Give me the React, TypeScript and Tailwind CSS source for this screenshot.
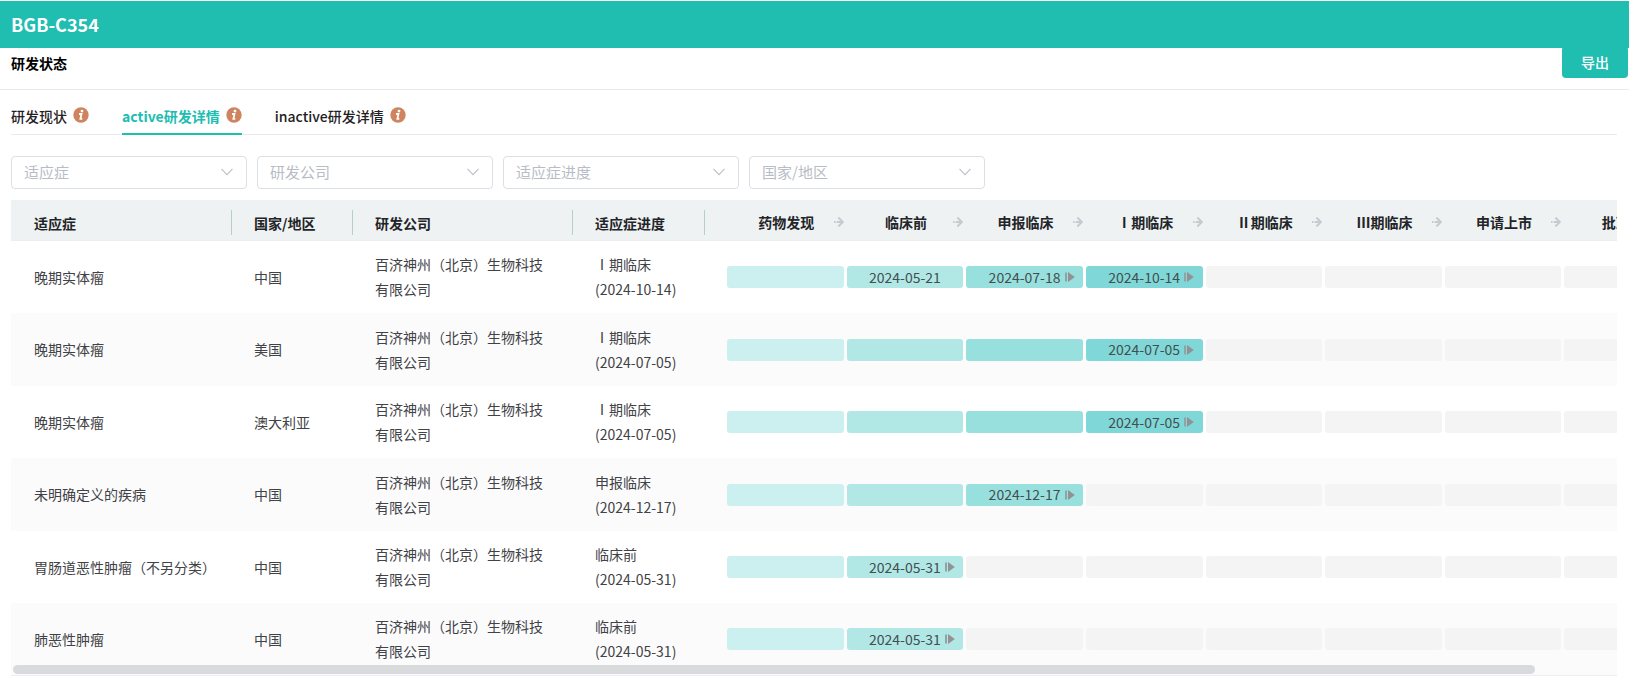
import React, { useState } from 'react';

type Tab = {
  key: string;
  label: string;
};

type Trial = {
  indication: string;
  region: string;
  company: string;
  phase: string;
  date: string;
  reached: number;
  dates: Record<number, { value: string; source?: boolean }>;
};

const tabs: Tab[] = [
  { key: 'status', label: '研发现状' },
  { key: 'active', label: 'active研发详情' },
  { key: 'inactive', label: 'inactive研发详情' },
];

const filters = ['适应症', '研发公司', '适应症进度', '国家/地区'];

const stages = ['药物发现', '临床前', '申报临床', 'Ⅰ期临床', 'Ⅱ期临床', 'Ⅲ期临床', '申请上市', '批准后'];

const stageColors = ['bg-[#cbf0ef]', 'bg-[#b1e8e6]', 'bg-[#98e0de]', 'bg-[#7fd8d7]'];

const company = '百济神州（北京）生物科技有限公司';

const trials: Trial[] = [
  {
    indication: '晚期实体瘤',
    region: '中国',
    company,
    phase: 'Ⅰ期临床',
    date: '2024-10-14',
    reached: 4,
    dates: {
      1: { value: '2024-05-21' },
      2: { value: '2024-07-18', source: true },
      3: { value: '2024-10-14', source: true },
    },
  },
  {
    indication: '晚期实体瘤',
    region: '美国',
    company,
    phase: 'Ⅰ期临床',
    date: '2024-07-05',
    reached: 4,
    dates: { 3: { value: '2024-07-05', source: true } },
  },
  {
    indication: '晚期实体瘤',
    region: '澳大利亚',
    company,
    phase: 'Ⅰ期临床',
    date: '2024-07-05',
    reached: 4,
    dates: { 3: { value: '2024-07-05', source: true } },
  },
  {
    indication: '未明确定义的疾病',
    region: '中国',
    company,
    phase: '申报临床',
    date: '2024-12-17',
    reached: 3,
    dates: { 2: { value: '2024-12-17', source: true } },
  },
  {
    indication: '胃肠道恶性肿瘤（不另分类）',
    region: '中国',
    company,
    phase: '临床前',
    date: '2024-05-31',
    reached: 2,
    dates: { 1: { value: '2024-05-31', source: true } },
  },
  {
    indication: '肺恶性肿瘤',
    region: '中国',
    company,
    phase: '临床前',
    date: '2024-05-31',
    reached: 2,
    dates: { 1: { value: '2024-05-31', source: true } },
  },
];

const InfoIcon = () => (
  <svg viewBox="0 0 16 16" className="mb-0.5 h-4 w-4 shrink-0" aria-hidden="true">
    <circle cx="8" cy="8" r="7.7" fill="#cf8460" />
    <circle cx="9" cy="4.1" r="1.4" fill="#fff" />
    <path d="M6 7h2.5l-1.1 4.9h1.9" fill="none" stroke="#fff" strokeWidth="1.8" />
  </svg>
);

const StageArrow = () => (
  <svg viewBox="0 0 10 10" className="h-[10px] w-[10px] shrink-0" fill="none" stroke="#c5cbd0" strokeWidth="2.1" aria-hidden="true">
    <path d="M0 5h1.6M2.6 5h6M4.4 0.6L8.8 5L4.4 9.4" />
  </svg>
);

const SourceIcon = () => (
  <svg viewBox="0 0 10 10" className="absolute left-full top-1/2 ml-1 h-[10px] w-[10px] -translate-y-1/2" aria-hidden="true">
    <path d="M0 0.5h2v9H0z" fill="#8fa5a5" />
    <path d="M3 0L9.8 5L3 10z" fill="#929292" />
  </svg>
);

const FilterSelect: React.FC<{ label: string }> = ({ label }) => (
  <div className="relative w-[236px]">
    <select
      aria-label={label}
      defaultValue=""
      className="block h-[33px] w-full appearance-none rounded border border-[#dcdfe6] bg-white px-3 pb-0.5 text-[15px] text-[#b8bcc5] outline-none"
    >
      <option value="">{label}</option>
    </select>
    <svg viewBox="0 0 12 8" className="pointer-events-none absolute right-[14px] top-3 h-2 w-3" fill="none" stroke="#bcc0c8" strokeWidth="1.1" aria-hidden="true">
      <path d="M0.5 0.8L6 6.6L11.5 0.8" />
    </svg>
  </div>
);

const HeadCell: React.FC<{ children: React.ReactNode }> = ({ children }) => (
  <th className="border-b border-[#ebeef5] p-0 text-left font-bold first:pl-px">
    <div className="mt-1 h-[25px] border-r border-[#b9cec9] pl-[22px] leading-[27px]">{children}</div>
  </th>
);

const StageBar: React.FC<{ trial: Trial; index: number }> = ({ trial, index }) => {
  const date = trial.dates[index];
  return (
    <div
      className={`flex h-[22px] flex-1 items-center justify-center rounded-[3px] ${
        index < trial.reached ? stageColors[index] : 'bg-[#f4f4f4]'
      }`}
    >
      {date && (
        <span className="relative text-[#444e50]">
          {date.value}
          {date.source && <SourceIcon />}
        </span>
      )}
    </div>
  );
};

const App: React.FC = () => {
  const [activeTab, setActiveTab] = useState('active');

  return (
    <div className="bg-white pt-px text-sm text-[#3f4246] [font-family:'Noto_Sans_CJK_SC','Noto_Sans',sans-serif]">
      <header className="flex h-[47px] items-center bg-[#20bdb1] px-[11px] pb-0.5">
        <h1 className="text-lg font-bold text-white">BGB-C354</h1>
      </header>

      <div className="flex h-[42px] items-start justify-between border-b border-[#e9e9ee] pl-[11px] pr-px">
        <h2 className="leading-[30px] font-bold text-black">研发状态</h2>
        <button type="button" className="-mt-0.5 h-8 rounded bg-[#20bdb1] px-[19px] font-medium text-white">
          导出
        </button>
      </div>

      <main className="pl-[11px] pr-3">
        <nav className="mt-2 flex h-[37px] gap-[33px] border-b border-[#e9e9ee]" role="tablist">
          {tabs.map((tab) => (
            <button
              key={tab.key}
              type="button"
              role="tab"
              aria-selected={tab.key === activeTab}
              onClick={() => setActiveTab(tab.key)}
              className={`flex h-[37px] items-center gap-1.5 border-b-2 ${
                tab.key === activeTab
                  ? 'border-[#20bdb1] font-bold text-[#20bdb1]'
                  : 'border-transparent font-medium text-[#1f2124]'
              }`}
            >
              {tab.label}
              <InfoIcon />
            </button>
          ))}
        </nav>

        <div className="mt-[21px] flex flex-wrap gap-[10px]">
          {filters.map((label) => (
            <FilterSelect key={label} label={label} />
          ))}
        </div>

        <div className="relative mt-[11px]">
          <div className="overflow-x-auto [scrollbar-width:none]">
            <table className="w-[1690px] table-fixed border-separate border-spacing-0">
              <colgroup>
                <col className="w-[221px]" />
                <col className="w-[121px]" />
                <col className="w-[220px]" />
                <col className="w-[132px]" />
                <col />
              </colgroup>
              <thead>
                <tr className="h-[41px] bg-[#eef2f3] text-[#222427]">
                  <HeadCell>适应症</HeadCell>
                  <HeadCell>国家/地区</HeadCell>
                  <HeadCell>研发公司</HeadCell>
                  <HeadCell>适应症进度</HeadCell>
                  <th className="border-b border-[#ebeef5] py-0 pl-[22px] pr-5 font-bold">
                    <div className="mt-1 flex gap-[3px]">
                      {stages.map((stage, index) => (
                        <div key={stage} className="flex flex-1 items-center pl-3">
                          <span className="flex-1 text-center leading-[25px]">{stage}</span>
                          {index < stages.length - 1 ? <StageArrow /> : <span className="w-3" />}
                        </div>
                      ))}
                    </div>
                  </th>
                </tr>
              </thead>
              <tbody>
                {trials.map((trial, i) => (
                  <tr key={i} className="h-[72px] leading-[25px] even:h-[73px] even:bg-[#fbfbfb] last:*:border-b last:*:border-[#ebeef5]">
                    <td className="py-0 pl-[23px]">{trial.indication}</td>
                    <td className="py-0 pl-[22px]">{trial.region}</td>
                    <td className="px-[22px] py-0">{trial.company}</td>
                    <td className="py-0 pl-[22px]">
                      {trial.phase}
                      <br />({trial.date})
                    </td>
                    <td className="py-0 pl-[22px] pr-5">
                      <div className="flex gap-[3px]">
                        {stages.map((stage, index) => (
                          <StageBar key={stage} trial={trial} index={index} />
                        ))}
                      </div>
                    </td>
                  </tr>
                ))}
              </tbody>
            </table>
          </div>
          <div className="absolute inset-x-[2px] bottom-[2px] h-[9px]">
            <div className="h-full w-[95%] rounded-full bg-[#d9dadb]" />
          </div>
        </div>
      </main>
    </div>
  );
};

export default App;
